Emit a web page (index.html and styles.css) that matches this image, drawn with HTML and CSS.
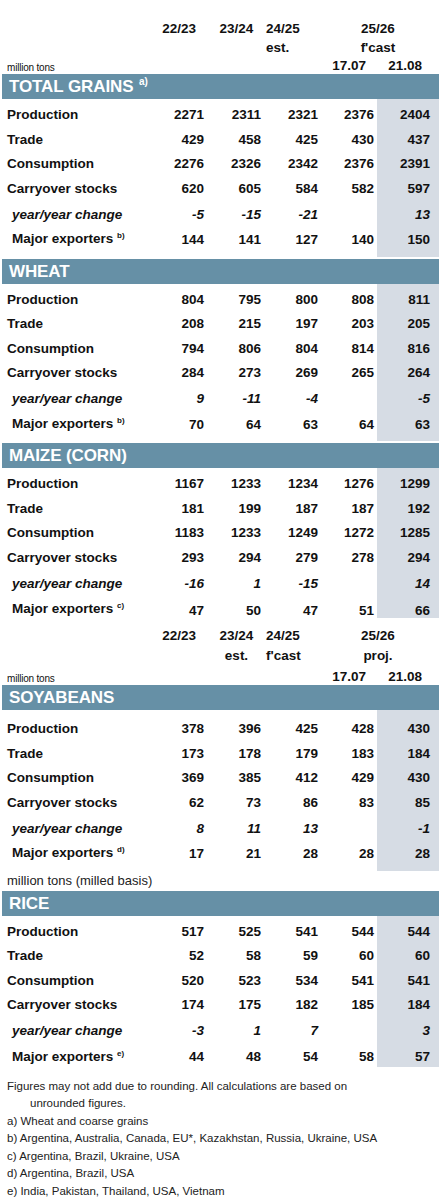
FILE: index.html
```html
<!DOCTYPE html>
<html>
<head>
<meta charset="utf-8">
<link rel="stylesheet" href="styles.css">
</head>
<body>
<div class="page">

  <div class="colhead first">
    <div class="hrow">
      <span></span><span class="h1">22/23</span><span class="h2">23/24</span><span class="h3">24/25</span><span class="h45">25/26</span>
    </div>
    <div class="hrow">
      <span></span><span class="h1"></span><span class="h2"></span><span class="h3">est.</span><span class="h45">f'cast</span>
    </div>
    <div class="hrow last">
      <span class="unit">million tons</span><span></span><span></span><span></span><span class="h4">17.07</span><span class="h5">21.08</span>
    </div>
  </div>

  <section class="section">
    <div class="bar">TOTAL GRAINS <sup>a)</sup></div>
    <div class="rows">
      <div class="row"><span class="lbl">Production</span><span>2271</span><span>2311</span><span>2321</span><span>2376</span><span>2404</span></div>
      <div class="row"><span class="lbl">Trade</span><span>429</span><span>458</span><span>425</span><span>430</span><span>437</span></div>
      <div class="row"><span class="lbl">Consumption</span><span>2276</span><span>2326</span><span>2342</span><span>2376</span><span>2391</span></div>
      <div class="row"><span class="lbl">Carryover stocks</span><span>620</span><span>605</span><span>584</span><span>582</span><span>597</span></div>
      <div class="row yoy"><span class="lbl">year/year change</span><span>-5</span><span>-15</span><span>-21</span><span></span><span>13</span></div>
      <div class="row major"><span class="lbl">Major exporters <sup>b)</sup></span><span>144</span><span>141</span><span>127</span><span>140</span><span>150</span></div>
    </div>
  </section>

  <section class="section">
    <div class="bar">WHEAT</div>
    <div class="rows">
      <div class="row"><span class="lbl">Production</span><span>804</span><span>795</span><span>800</span><span>808</span><span>811</span></div>
      <div class="row"><span class="lbl">Trade</span><span>208</span><span>215</span><span>197</span><span>203</span><span>205</span></div>
      <div class="row"><span class="lbl">Consumption</span><span>794</span><span>806</span><span>804</span><span>814</span><span>816</span></div>
      <div class="row"><span class="lbl">Carryover stocks</span><span>284</span><span>273</span><span>269</span><span>265</span><span>264</span></div>
      <div class="row yoy"><span class="lbl">year/year change</span><span>9</span><span>-11</span><span>-4</span><span></span><span>-5</span></div>
      <div class="row major"><span class="lbl">Major exporters <sup>b)</sup></span><span>70</span><span>64</span><span>63</span><span>64</span><span>63</span></div>
    </div>
  </section>

  <section class="section">
    <div class="bar">MAIZE (CORN)</div>
    <div class="rows tight">
      <div class="row"><span class="lbl">Production</span><span>1167</span><span>1233</span><span>1234</span><span>1276</span><span>1299</span></div>
      <div class="row"><span class="lbl">Trade</span><span>181</span><span>199</span><span>187</span><span>187</span><span>192</span></div>
      <div class="row"><span class="lbl">Consumption</span><span>1183</span><span>1233</span><span>1249</span><span>1272</span><span>1285</span></div>
      <div class="row"><span class="lbl">Carryover stocks</span><span>293</span><span>294</span><span>279</span><span>278</span><span>294</span></div>
      <div class="row yoy"><span class="lbl">year/year change</span><span>-16</span><span>1</span><span>-15</span><span></span><span>14</span></div>
      <div class="row major low"><span class="lbl">Major exporters <sup>c)</sup></span><span>47</span><span>50</span><span>47</span><span>51</span><span>66</span></div>
    </div>
  </section>

  <div class="colhead second">
    <div class="hrow">
      <span></span><span class="h1">22/23</span><span class="h2">23/24</span><span class="h3">24/25</span><span class="h45">25/26</span>
    </div>
    <div class="hrow">
      <span></span><span class="h1"></span><span class="h2">est.</span><span class="h3">f'cast</span><span class="h45">proj.</span>
    </div>
    <div class="hrow last">
      <span class="unit">million tons</span><span></span><span></span><span></span><span class="h4">17.07</span><span class="h5">21.08</span>
    </div>
  </div>

  <section class="section">
    <div class="bar">SOYABEANS</div>
    <div class="rows soy">
      <div class="row"><span class="lbl">Production</span><span>378</span><span>396</span><span>425</span><span>428</span><span>430</span></div>
      <div class="row"><span class="lbl">Trade</span><span>173</span><span>178</span><span>179</span><span>183</span><span>184</span></div>
      <div class="row"><span class="lbl">Consumption</span><span>369</span><span>385</span><span>412</span><span>429</span><span>430</span></div>
      <div class="row"><span class="lbl">Carryover stocks</span><span>62</span><span>73</span><span>86</span><span>83</span><span>85</span></div>
      <div class="row yoy"><span class="lbl">year/year change</span><span>8</span><span>11</span><span>13</span><span></span><span>-1</span></div>
      <div class="row major"><span class="lbl">Major exporters <sup>d)</sup></span><span>17</span><span>21</span><span>28</span><span>28</span><span>28</span></div>
    </div>
  </section>

  <div class="unit-line">million tons (milled basis)</div>

  <section class="section">
    <div class="bar">RICE</div>
    <div class="rows end">
      <div class="row"><span class="lbl">Production</span><span>517</span><span>525</span><span>541</span><span>544</span><span>544</span></div>
      <div class="row"><span class="lbl">Trade</span><span>52</span><span>58</span><span>59</span><span>60</span><span>60</span></div>
      <div class="row"><span class="lbl">Consumption</span><span>520</span><span>523</span><span>534</span><span>541</span><span>541</span></div>
      <div class="row"><span class="lbl">Carryover stocks</span><span>174</span><span>175</span><span>182</span><span>185</span><span>184</span></div>
      <div class="row yoy"><span class="lbl">year/year change</span><span>-3</span><span>1</span><span>7</span><span></span><span>3</span></div>
      <div class="row major last"><span class="lbl">Major exporters <sup>e)</sup></span><span>44</span><span>48</span><span>54</span><span>58</span><span>57</span></div>
    </div>
  </section>

  <div class="notes">
    <p class="hang">Figures may not add due to rounding. All calculations are based on unrounded figures.</p>
    <p>a) Wheat and coarse grains</p>
    <p>b) Argentina, Australia, Canada, EU*, Kazakhstan, Russia, Ukraine, USA</p>
    <p>c) Argentina, Brazil, Ukraine, USA</p>
    <p>d) Argentina, Brazil, USA</p>
    <p>e) India, Pakistan, Thailand, USA, Vietnam</p>
  </div>

</div>
</body>
</html>
```

FILE: styles.css
```css
* { box-sizing: border-box; }

html, body {
  margin: 0;
  padding: 0;
  background: #ffffff;
}

body {
  font-family: "Liberation Sans", Arial, sans-serif;
  color: #111111;
}

.page {
  width: 441px;
  padding: 0 2px;
}

/* column headers */
.colhead {
  font-weight: bold;
  font-size: 13.5px;
}
.colhead.first { padding-top: 19px; }
.colhead.second { padding-top: 6px; }

.hrow {
  display: grid;
  grid-template-columns: 148px 57px 57px 57px 56px 62px;
  height: 19px;
  align-items: center;
  line-height: 16px;
}
.colhead.second .hrow { height: 20px; }
.colhead .hrow.last { height: 17px; align-items: end; }
.colhead.second .hrow.last { height: 19px; }

.h1 { text-align: right; padding-right: 11px; }
.h2 { text-align: center; padding-left: 2px; }
.h3 { text-align: left; padding-left: 2px; }
.h45 { grid-column: 5 / span 2; text-align: center; padding-right: 4px; }
.h4 { text-align: right; padding-right: 11px; }
.h5 { text-align: right; padding-right: 17px; }

.unit {
  font-weight: normal;
  font-size: 10px;
  padding-left: 5px;
  letter-spacing: -0.2px;
  line-height: 13px;
}

/* sections */
.section { margin-bottom: 2px; }

.bar {
  background: #6690a6;
  color: #ffffff;
  font-weight: bold;
  font-size: 17px;
  height: 25px;
  line-height: 25px;
  padding-left: 7px;
  letter-spacing: -0.1px;
}
.bar sup {
  font-size: 10px;
  vertical-align: 0;
  position: relative;
  top: -7px;
  margin-left: 1px;
}

.rows {
  padding: 4px 0 4px;
  background: linear-gradient(to right, transparent 375px, #d6dce4 375px);
  font-weight: bold;
  font-size: 13.5px;
}
.rows.tight { padding-bottom: 0; }
.rows.soy { padding-top: 7px; padding-bottom: 4px; }
.rows.end { padding-bottom: 0; }

.row {
  display: grid;
  grid-template-columns: 148px 57px 57px 57px 56px 62px;
  height: 24.5px;
  align-items: center;
  line-height: 16px;
}
.row span { text-align: right; padding-right: 3px; }
.row span:last-child { padding-right: 9px; }
.row .lbl { text-align: left; padding-left: 5px; padding-right: 0; white-space: nowrap; }

.row.yoy { height: 27px; font-style: italic; }
.row.yoy .lbl, .row.major .lbl { padding-left: 10px; }
.row.major.low { height: 21px; align-items: end; line-height: 14px; }
.row.major.last { height: 22px; align-items: start; padding-top: 4px; }

.row sup {
  font-size: 8px;
  vertical-align: 0;
  position: relative;
  top: -5px;
}

.unit-line {
  font-size: 13px;
  height: 20px;
  line-height: 20px;
  padding-left: 5px;
  margin-top: -2px;
  color: #222222;
}

/* notes */
.notes {
  padding-top: 9px;
  font-size: 11.5px;
  line-height: 17.6px;
  color: #222222;
}
.notes p {
  margin: 0;
  padding-left: 5px;
}
.notes p.hang {
  padding-left: 28px;
  text-indent: -23px;
  padding-right: 60px;
}
```
